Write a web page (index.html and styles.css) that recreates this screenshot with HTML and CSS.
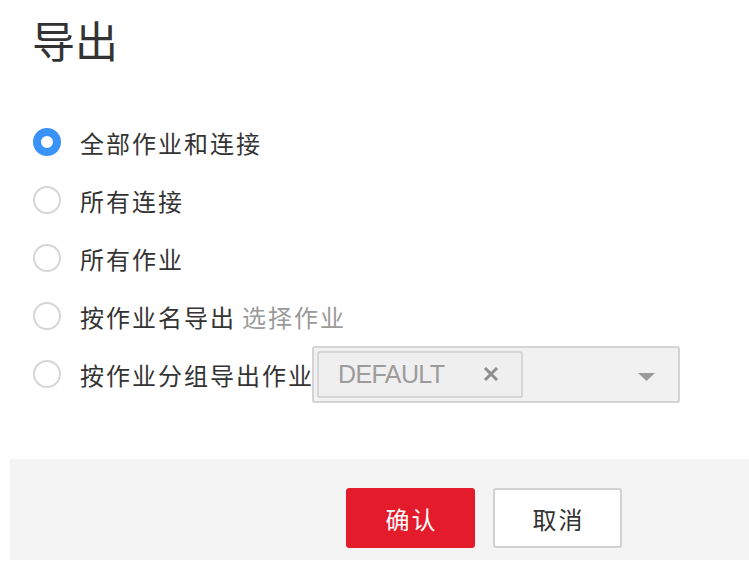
FILE: index.html
```html
<!DOCTYPE html>
<html lang="zh-CN">
<head>
<meta charset="utf-8">
<title>导出</title>
<link rel="stylesheet" href="styles.css">
</head>
<body>
<div class="dialog">
  <h1 class="title">导出</h1>
  <div class="options">
    <label class="option">
      <span class="radio checked"></span>
      <span class="label">全部作业和连接</span>
    </label>
    <label class="option">
      <span class="radio"></span>
      <span class="label">所有连接</span>
    </label>
    <label class="option">
      <span class="radio"></span>
      <span class="label">所有作业</span>
    </label>
    <label class="option">
      <span class="radio"></span>
      <span class="label">按作业名导出</span>
      <span class="link">选择作业</span>
    </label>
    <label class="option">
      <span class="radio"></span>
      <span class="label">按作业分组导出作业</span>
      <span class="select">
        <span class="tag">
          <span class="tag-text">DEFAULT</span>
          <svg class="tag-close" width="16" height="14" viewBox="0 0 16 14"><path d="M2 1 L14 13 M14 1 L2 13" stroke="#8e8e8e" stroke-width="3" fill="none"/></svg>
        </span>
        <svg class="caret" width="17" height="8" viewBox="0 0 17 8"><path d="M0 0 H17 L8.5 8 Z" fill="#9b9b9b"/></svg>
      </span>
    </label>
  </div>
  <div class="footer">
    <button class="btn btn-primary">确认</button>
    <button class="btn btn-default">取消</button>
  </div>
</div>
</body>
</html>
```

FILE: styles.css
```css
html, body {
  margin: 0;
  padding: 0;
  background: #ffffff;
}

body {
  font-family: "Noto Sans CJK SC", "Noto Sans", sans-serif;
  color: #333333;
}

.dialog {
  width: 749px;
}

.title {
  margin: 15px 0 0 32px;
  font-size: 43px;
  line-height: 48px;
  font-weight: normal;
  color: #333333;
}

.options {
  margin-top: 50px;
  padding-left: 33px;
  display: flex;
  flex-direction: column;
}

.option {
  height: 58px;
  display: flex;
  align-items: center;
}

.radio {
  box-sizing: border-box;
  width: 28px;
  height: 28px;
  border-radius: 50%;
  border: 2px solid #d6d6d6;
  background: #ffffff;
  margin-right: 19px;
  flex: none;
}

.radio.checked {
  border: 8px solid #3a93f9;
}

.label {
  font-size: 24px;
  letter-spacing: 2px;
  color: #333333;
  white-space: nowrap;
}

.link {
  margin-left: 6px;
  font-size: 24px;
  letter-spacing: 2px;
  color: #9a9a9a;
  white-space: nowrap;
}

.select {
  box-sizing: border-box;
  width: 368px;
  height: 57px;
  margin-left: -2px;
  border: 2px solid #d4d4d4;
  border-radius: 3px;
  background: #f1f1f1;
  padding: 3px;
  display: flex;
  align-items: flex-start;
  justify-content: space-between;
}

.tag {
  box-sizing: border-box;
  width: 206px;
  height: 47px;
  border: 2px solid #d6d6d6;
  border-radius: 3px;
  background: #efefef;
  display: flex;
  align-items: center;
  padding-left: 19px;
}

.tag-text {
  font-family: "Liberation Sans", Arial, sans-serif;
  font-size: 25px;
  letter-spacing: -0.6px;
  color: #9c9c9c;
  width: 145px;
}

.tag-close {
  display: block;
}

.caret {
  display: block;
  margin: 22px 20px 0 0;
}

.footer {
  margin: 56px 0 0 10px;
  height: 101px;
  background: #f4f4f4;
  display: flex;
  justify-content: flex-end;
  align-items: flex-start;
  padding: 29px 127px 0 0;
  box-sizing: border-box;
  gap: 18px;
}

.btn {
  box-sizing: border-box;
  width: 129px;
  height: 60px;
  border-radius: 3px;
  font-family: "Noto Sans CJK SC", sans-serif;
  font-size: 24px;
  letter-spacing: 2px;
  padding: 0 0 0 2px;
  cursor: pointer;
}

.btn-primary {
  background: #e31b2b;
  border: 1px solid #e31b2b;
  color: #ffffff;
}

.btn-default {
  background: #ffffff;
  border: 2px solid #d2d2d2;
  color: #333333;
}
```
